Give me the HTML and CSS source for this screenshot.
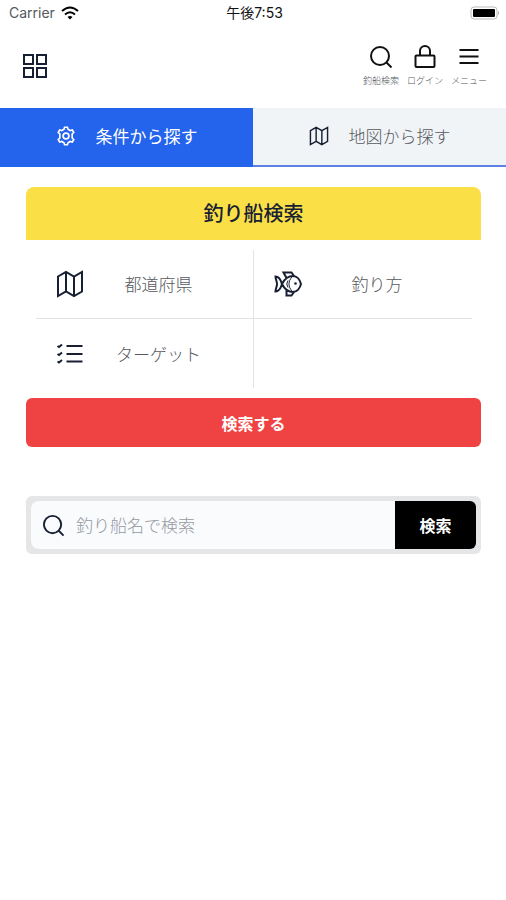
FILE: index.html
```html
<!DOCTYPE html>
<html lang="ja">
<head>
<meta charset="utf-8">
<meta name="viewport" content="width=device-width, initial-scale=1">
<title>釣り船検索</title>
<link rel="stylesheet" href="styles.css">
</head>
<body>
<svg class="defs" aria-hidden="true">
  <symbol id="search" viewBox="0 0 24 24"><circle cx="11" cy="11" r="9"/><path d="M17.500 17.500 22.500 22.500"/></symbol>
  <symbol id="map" viewBox="0 0 28 28"><path d="M2 6.500 10 2l8 4.500 8-4.500v19.500l-8 4.500-8-4.500-8 4.500zM10 2v19.500M18 6.500V26"/></symbol>
</svg>

<div class="status">
  <div class="status-left">
    <span>Carrier</span>
    <svg class="wifi" viewBox="0 0 18 14" aria-hidden="true">
      <path d="M1 5Q9-2 17 5M4 8.500q5-4.500 10 0"/><path class="solid" d="M6.500 11q2.500-2 5 0L9 13.500z"/>
    </svg>
  </div>
  <time class="clock">午後7:53</time>
  <svg class="battery" viewBox="0 0 30 14" aria-hidden="true">
    <rect class="battery-shell" x="1" y="1" width="26" height="12" rx="3"/>
    <rect x="3" y="3" width="22" height="8" rx="1"/>
    <path class="battery-cap" d="M28 5q2 2 0 4z"/>
  </svg>
</div>

<header class="header">
  <button class="apps" type="button" aria-label="ホーム">
    <svg viewBox="0 0 26 26"><path d="M2 2h9v9H2zM15 2h9v9h-9zM2 15h9v9H2zM15 15h9v9h-9z"/></svg>
  </button>
  <nav class="nav">
    <a href="#search-form"><svg class="icon"><use href="#search"/></svg><span>釣船検索</span></a>
    <a href="#login"><svg class="icon" viewBox="0 0 24 24"><rect x="2.500" y="10.500" width="19" height="11.500" rx="1"/><path d="M7 10.500V6a5 5 0 0 1 10 0v4.500"/></svg><span>ログイン</span></a>
    <a href="#menu"><svg class="icon" viewBox="0 0 24 24"><path d="M2.500 5h19M2.500 11.500h19M2.500 18h19"/></svg><span>メニュー</span></a>
  </nav>
</header>

<nav class="tabs">
  <a class="tab active" href="#conditions">
    <svg viewBox="0 0 24 24"><path d="M9.600 3.900 10.300 1.500h3.400l.7 2.400 2.600 1.500 2.600-.6 1.700 2.900-1.900 1.900v4.800l1.900 1.900-1.700 2.900-2.600-.6-2.600 1.500-.7 2.400h-3.400l-.7-2.400L7 18.600l-2.600.6-1.700-2.900 1.900-1.900V9.600L2.700 7.700l1.700-2.900 2.600.6z"/><circle cx="12" cy="12" r="3.500"/></svg>
    <span>条件から探す</span>
  </a>
  <a class="tab" href="#map-search">
    <svg><use href="#map"/></svg>
    <span>地図から探す</span>
  </a>
</nav>

<main class="main">
  <section id="conditions">
    <h1 class="title">釣り船検索</h1>
    <div class="grid">
      <button class="cell" type="button"><svg><use href="#map"/></svg><span>都道府県</span></button>
      <button class="cell" type="button">
        <svg viewBox="0 0 28 28"><path d="M8 14C10.500 9 14.500 6 19 6c4 0 7 4 8 8-1 4-4 8-8 8-4.500 0-8.500-3-11-8zM8 14C7 10.500 5 6.500 1.500 6.500 1.500 9 3 11.500 3 14s-1.500 5-1.500 7.500C5 21.500 7 17.500 8 14zM12.500 8 9.500 2.500h8L20 6M12.500 20v5.500h5L20 22"/><path class="thin" d="M18 7c-4 4-4 10 0 14M14 10.500q-2.500 3.500 0 7"/><circle class="dot" cx="21.500" cy="13.500" r="1.300"/></svg>
        <span>釣り方</span>
      </button>
      <button class="cell" type="button">
        <svg viewBox="0 0 28 28"><path d="M10.500 6h16M10.500 14h16M10.500 21.500h16M1.500 6l1.500 1 3-2.500M1.500 14l1.500 1 3-2.500M1.500 21.500l1.500 1L6 20"/></svg>
        <span>ターゲット</span>
      </button>
      <div class="cell"></div>
    </div>
    <button class="submit" type="button">検索する</button>
  </section>

  <form class="search" id="search-form">
    <div class="field">
      <label for="boat" aria-label="釣り船名"><svg><use href="#search"/></svg></label>
      <input id="boat" type="search" placeholder="釣り船名で検索">
    </div>
    <button type="button">検索</button>
  </form>
</main>
</body>
</html>
```
FILE: styles.css
```css
* { box-sizing: border-box; }

body {
  margin: 0;
  background: #fff;
  color: #555960;
  font-family: "Noto Sans CJK JP", sans-serif;
  font-size: 17px;
  font-weight: 300;
  line-height: 24px;
}

svg {
  flex: none;
  fill: none;
  stroke: #172033;
  stroke-width: 2;
}

button, input { font: inherit; color: inherit; border: 0; padding: 0; background: none; }
a { color: inherit; text-decoration: none; }
.defs { position: absolute; width: 0; height: 0; }

.status {
  display: grid;
  grid-template-columns: 1fr auto 1fr;
  align-items: center;
  height: 26px;
  padding: 0 6px 0 9px;
  font-family: Inter, "Noto Sans CJK JP", sans-serif;
  font-size: 14px;
  font-weight: 400;
}
.status-left { display: flex; align-items: center; gap: 6px; }
.status svg { stroke: #000; }
.wifi { width: 18px; height: 14px; }
.wifi .solid { fill: #000; stroke: none; }
.clock { color: #111; }
.battery { width: 30px; height: 14px; justify-self: end; }
.battery rect { fill: #000; stroke: none; }
.battery .battery-shell { fill: #fff; stroke: #bbb; stroke-width: 1; }
.battery .battery-cap { fill: #aaa; stroke: none; }

.header {
  display: flex;
  justify-content: space-between;
  align-items: center;
  height: 82px;
  padding: 0 19px 2px 22px;
}
.apps svg { display: block; width: 26px; height: 26px; }
.nav { display: flex; gap: 8px; }
.nav a {
  display: flex;
  flex-direction: column;
  align-items: center;
  gap: 6px;
  font-size: 9px;
  line-height: 12px;
}
.icon { width: 24px; height: 24px; stroke: #111; }

.tabs { display: grid; grid-template-columns: 1fr 1fr; }
.tab {
  display: flex;
  align-items: center;
  justify-content: center;
  gap: 20px;
  height: 59px;
  padding-bottom: 2px;
  background: #f1f4f6;
  border-bottom: 2px solid #5f80e4;
}
.tab svg { width: 20px; height: 20px; }
.tab.active { background: #2463eb; color: #fff; border-color: #2463eb; font-weight: 400; }
.tab.active svg { stroke: #fff; }

.main { padding: 20px 25px 20px 26px; }

.title {
  margin: 0;
  padding: 11px 12px 13px;
  border-radius: 8px 8px 0 0;
  background: #fae046;
  color: #172033;
  font-size: 20px;
  font-weight: 500;
  line-height: 29px;
  text-align: center;
}

.grid {
  display: grid;
  grid-template-columns: 1fr 1fr;
  margin: 10px 9px 10px 10px;
}
.cell {
  display: grid;
  grid-template-columns: 68px 1fr 40px;
  align-items: center;
  height: 69px;
}
.cell:nth-child(odd) { border-right: 1px solid #e2e3e5; }
.cell:nth-child(-n+2) { border-bottom: 1px solid #e2e3e5; }
.cell svg { width: 28px; height: 28px; justify-self: center; }
.cell .dot { fill: #172033; stroke: none; }
.cell .thin { stroke-width: 1; }

.submit {
  display: block;
  width: 100%;
  height: 49px;
  border-radius: 6px;
  background: #ef4343;
  color: #fff;
  font-size: 16px;
  font-weight: 700;
}

.search {
  display: flex;
  margin-top: 49px;
  padding: 5px;
  border-radius: 6px;
  background: #e4e6e8;
}
.field {
  display: flex;
  align-items: center;
  flex: 1;
  min-width: 0;
  height: 48px;
  padding-left: 11px;
  gap: 11px;
  border-radius: 8px 0 0 8px;
  background: #fafbfd;
}
.field label, .field svg { display: block; width: 23px; height: 23px; }
.field input { flex: 1; min-width: 0; outline: 0; }
.field input::placeholder { color: #9499a1; opacity: 1; }
.search button {
  width: 81px;
  border-radius: 0 6px 6px 0;
  background: #000;
  color: #fff;
  font-size: 16px;
  font-weight: 700;
}
```
